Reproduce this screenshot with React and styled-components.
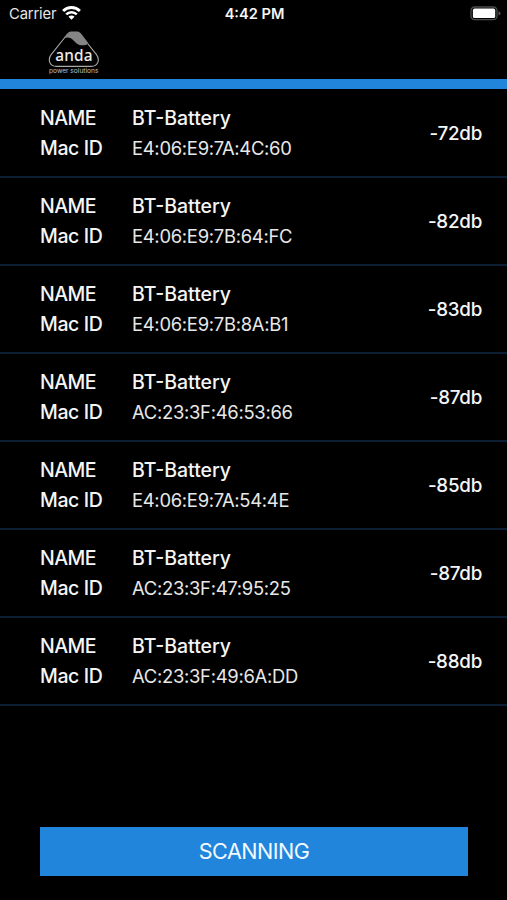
import React from "react";
import styled, { createGlobalStyle } from "styled-components";

const GlobalStyle = createGlobalStyle`
  * {
    box-sizing: border-box;
  }

  body {
    margin: 0;
    background: #000000;
    font-family: Inter, "Liberation Sans", sans-serif;
  }
`;

const devices = [
  { name: "BT-Battery", mac: "E4:06:E9:7A:4C:60", rssi: -72 },
  { name: "BT-Battery", mac: "E4:06:E9:7B:64:FC", rssi: -82 },
  { name: "BT-Battery", mac: "E4:06:E9:7B:8A:B1", rssi: -83 },
  { name: "BT-Battery", mac: "AC:23:3F:46:53:66", rssi: -87 },
  { name: "BT-Battery", mac: "E4:06:E9:7A:54:4E", rssi: -85 },
  { name: "BT-Battery", mac: "AC:23:3F:47:95:25", rssi: -87 },
  { name: "BT-Battery", mac: "AC:23:3F:49:6A:DD", rssi: -88 },
];

const WifiIcon = () => (
  <svg width="19" height="14" viewBox="0 0 19 14" fill="none">
    <path d="M1.1 5a11.9 11.9 0 0 1 16.8 0" stroke="#fff" strokeWidth="2.9" />
    <path d="M4.2 8.4a7.6 7.6 0 0 1 10.6 0" stroke="#fff" strokeWidth="2.6" />
    <path d="M9.5 13.8 6.5 10.8a4.2 4.2 0 0 1 6 0z" fill="#fff" />
  </svg>
);

const BatteryIcon = () => (
  <svg width="31" height="15" viewBox="0 0 31 15" fill="none">
    <rect x="1" y="1" width="26" height="12.6" rx="3.6" stroke="#4c4c4c" strokeWidth="1.3" />
    <rect x="2.9" y="2.6" width="22.3" height="9.4" rx="1.6" fill="#fff" />
    <path d="M28.5 5.2c1.6.6 2 1.3 2 2.1s-.4 1.5-2 2.1z" fill="#5a5a5a" />
  </svg>
);

const Logo = () => (
  <svg width="52" height="45" viewBox="0 0 52 45" fill="none">
    <path
      d="M17.2 6 3.3 23.4C-.7 28.6 1.6 35.4 8.4 35.4h34.8c6.8 0 9.1-6.8 5.1-12L40 13"
      stroke="#a9a9a9"
      strokeWidth="1.1"
    />
    <path
      d="M15.5 7.4C18.8 3 20 .8 23 .5h6.2c2.2.2 3.2 1.3 4.6 3L40.6 12.4c-3 2.3-8.6 2.9-11.9.1-3.7-3.4-6.4-8.2-13.2-5.1z"
      fill="#858585"
    />
    <LogoName x="26" y="29.8">anda</LogoName>
    <LogoTagline x="25.7" y="41.5">power solutions</LogoTagline>
  </svg>
);

export default function App() {
  return (
    <>
      <GlobalStyle />
      <Screen>
        <StatusBar>
          <Carrier>
            Carrier
            <WifiIcon />
          </Carrier>
          <Clock>4:42 PM</Clock>
          <BatterySlot>
            <BatteryIcon />
          </BatterySlot>
        </StatusBar>
        <Header>
          <Logo />
        </Header>
        <DeviceList>
          {devices.map((device) => (
            <DeviceRow key={device.mac}>
              <Details>
                <Label $spacing="-0.5px">NAME</Label>
                <DeviceName>{device.name}</DeviceName>
                <Label $spacing="-0.4px">Mac ID</Label>
                <MacAddress>{device.mac}</MacAddress>
              </Details>
              <Signal>{device.rssi}db</Signal>
            </DeviceRow>
          ))}
        </DeviceList>
        <Footer>
          <ScanButton>SCANNING</ScanButton>
        </Footer>
      </Screen>
    </>
  );
}

const Screen = styled.div`
  display: flex;
  flex-direction: column;
  width: 507px;
  height: 900px;
  background: #000000;
  color: #f5f5f5;
  overflow: hidden;
`;

const StatusBar = styled.div`
  display: grid;
  grid-template-columns: 1fr auto 1fr;
  align-items: center;
  height: 27px;
  padding: 0 6px 0 9px;
`;

const Carrier = styled.div`
  display: flex;
  align-items: center;
  gap: 6px;
  font-size: 14.8px;
  line-height: 20px;
  letter-spacing: -0.15px;
  color: #e6e6e6;

  svg {
    margin-top: -2px;
  }
`;

const Clock = styled.div`
  padding-right: 1px;
  font-size: 14.6px;
  font-weight: 600;
  line-height: 20px;
`;

const BatterySlot = styled.div`
  display: flex;
  justify-content: flex-end;
`;

const Header = styled.div`
  height: 62px;
  padding: 4px 0 0 48px;
  border-bottom: 10px solid #2185dc;
`;

const LogoName = styled.text`
  font-family: "Noto Sans", sans-serif;
  font-size: 15.4px;
  font-weight: 500;
  letter-spacing: 0.2px;
  text-anchor: middle;
  fill: #ececec;
`;

const LogoTagline = styled.text`
  font-family: Inter, sans-serif;
  font-size: 6.6px;
  text-anchor: middle;
  fill: #c0c0c0;
`;

const DeviceList = styled.div`
  flex: 1;
  padding-top: 1px;
`;

const DeviceRow = styled.div`
  display: flex;
  align-items: center;
  justify-content: space-between;
  height: 88px;
  padding: 0 25px 0 40px;
  border-bottom: 2px solid #0c1e31;
`;

const Details = styled.div`
  display: grid;
  grid-template-columns: 92px auto;
  grid-template-rows: 29px 31px;
  align-items: center;
`;

const Label = styled.span`
  font-size: 19.5px;
  font-weight: 500;
  letter-spacing: ${(props) => props.$spacing || "0"};
`;

const DeviceName = styled.span`
  font-size: 19.5px;
  font-weight: 500;
`;

const MacAddress = styled.span`
  font-size: 18.4px;
  letter-spacing: -0.28px;
  color: #e8e8e8;
`;

const Signal = styled.div`
  font-size: 18.8px;
  font-weight: 500;
  letter-spacing: -0.25px;
`;

const Footer = styled.div`
  padding: 0 39px 24px 40px;
`;

const ScanButton = styled.button`
  display: block;
  width: 100%;
  height: 49px;
  padding: 0 0 2px;
  border: 0;
  background: #2185dc;
  color: #f2faff;
  font-family: inherit;
  font-size: 21.6px;
  letter-spacing: -0.55px;
`;
